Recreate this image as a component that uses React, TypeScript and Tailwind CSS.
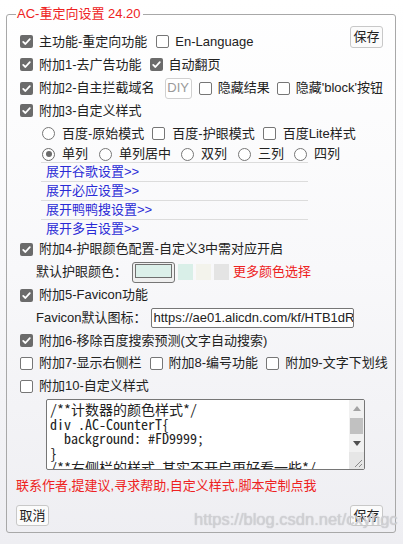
import React from "react";

const CB = ({ checked }: { checked?: boolean }) =>
  checked ? (
    <span className="inline-flex h-[13px] w-[13px] shrink-0 items-center justify-center rounded-[2px] bg-[#6b6b6b]">
      <svg width="13" height="13" viewBox="0 0 13 13">
        <path d="M3.2 6.9 L5.4 9 L9.8 4.1" fill="none" stroke="#fff" strokeWidth="1.8" strokeLinecap="round" strokeLinejoin="round" />
      </svg>
    </span>
  ) : (
    <span className="inline-block h-[13px] w-[13px] shrink-0 rounded-[2px] border border-[#767676] bg-white" />
  );

const Radio = ({ checked }: { checked?: boolean }) => (
  <span
    className={
      checked
        ? "flex h-[13px] w-[13px] shrink-0 items-center justify-center rounded-full border-[1.5px] border-[#6b6b6b] bg-white"
        : "flex h-[13px] w-[13px] shrink-0 items-center justify-center rounded-full border border-[#767676] bg-white"
    }
  >
    {checked && <span className="h-[6px] w-[6px] rounded-full bg-[#6b6b6b]" />}
  </span>
);

const Item = ({ checked, label, className = "" }: { checked?: boolean; label: string; className?: string }) => (
  <div className={"flex items-center gap-[6px] " + className}>
    <CB checked={checked} />
    <span className="whitespace-nowrap">{label}</span>
  </div>
);

const RItem = ({ checked, label, className = "" }: { checked?: boolean; label: string; className?: string }) => (
  <div className={"flex items-center gap-[7px] " + className}>
    <Radio checked={checked} />
    <span className="whitespace-nowrap">{label}</span>
  </div>
);

const Btn = ({ label }: { label: string }) => (
  <div className="flex h-[21px] w-[33px] items-center justify-center rounded-[3px] border border-[#c8c8c8] bg-[#fbfbfb] text-[13px] leading-[16px] text-[#222]">
    {label}
  </div>
);

const code = [
  "/**计数器的颜色样式*/",
  "div .AC-CounterT{",
  "  background: #FD9999;",
  "}",
  "/**右侧栏的样式-其实不开启更好看一些*/",
];

export default function App() {
  return (
    <div className="relative h-[544px] w-[403px] overflow-hidden bg-linear-to-b from-white via-[#f8f8fa] to-[#eeeef2] font-['Liberation_Sans','Noto_Sans_CJK_SC',sans-serif] text-[13px] leading-[18px] text-[#222]">
      <fieldset className="ml-[6px] mt-[4px] w-[390px] min-w-0 rounded-[3px] border border-[#a8a8a8] pb-[6px] pl-[9px] pr-[12px] pt-[6px]">
        <legend className="pl-[1px] pr-[2px] text-[13px] leading-[20px] text-[#ee2222]">AC-重定向设置 24.20</legend>

        {/* row 1 */}
        <div className="flex h-[23px] items-center">
          <Item checked label="主功能-重定向功能" className="ml-[4px]" />
          <Item label="En-Language" className="ml-[9px]" />
          <div className="mb-[10px] ml-auto">
            <div className="flex h-[22px] w-[33px] items-center justify-center rounded-[3px] border border-[#c8c8c8] bg-[#fbfbfb]">保存</div>
          </div>
        </div>

        {/* row 2 */}
        <div className="flex h-[23px] items-center">
          <Item checked label="附加1-去广告功能" className="ml-[4px]" />
          <Item checked label="自动翻页" className="ml-[8px]" />
        </div>

        {/* row 3 */}
        <div className="flex h-[24px] items-center">
          <Item checked label="附加2-自主拦截域名" className="ml-[4px]" />
          <div className="ml-[10px] flex h-[21px] w-[29px] items-center justify-center rounded-[3px] border border-[#d0d0d0] bg-white text-[#9a9a9a]">DIY</div>
          <Item label="隐藏结果" className="ml-[7px]" />
          <Item label="隐藏'block'按钮" className="ml-[7px]" />
        </div>

        {/* row 4 */}
        <div className="flex h-[21px] items-center">
          <Item checked label="附加3-自定义样式" className="ml-[4px]" />
        </div>

        {/* row 5 */}
        <div className="flex h-[25px] items-center pl-[26px]">
          <RItem label="百度-原始模式" />
          <Item label="百度-护眼模式" className="ml-[8px] gap-[7px]" />
          <Item label="百度Lite样式" className="ml-[8px] gap-[7px]" />
        </div>

        {/* row 6 */}
        <div className="flex h-[16px] items-center pl-[26px]">
          <RItem checked label="单列" />
          <RItem label="单列居中" className="ml-[11px]" />
          <RItem label="双列" className="ml-[10px]" />
          <RItem label="三列" className="ml-[11px]" />
          <RItem label="四列" className="ml-[10px]" />
        </div>

        {/* links */}
        <div className="ml-[25px] flex w-[267px] flex-col text-[#2a2ad6]">
          {["展开谷歌设置>>", "展开必应设置>>", "展开鸭鸭搜设置>>", "展开多吉设置>>"].map((t) => (
            <div key={t} className="flex h-[19px] items-center border-t border-[#dcdcdc] pl-[5px]">
              {t}
            </div>
          ))}
        </div>

        {/* 附加4 */}
        <div className="flex h-[22px] items-center">
          <Item checked label="附加4-护眼颜色配置-自定义3中需对应开启" className="ml-[4px]" />
        </div>

        {/* color row */}
        <div className="ml-[20px] flex h-[24px] items-center">
          <span className="whitespace-nowrap">默认护眼颜色：</span>
          <div className="ml-[5px] flex h-[21px] w-[43px] items-center justify-center rounded-[3px] border border-[#767676] bg-[#efefef]">
            <div className="mb-[2px] h-[14px] w-[37px] border border-[#6f6f6f] bg-[#dcf0ea]" />
          </div>
          <div className="ml-[3px] flex gap-[3px]">
            <span className="h-[16px] w-[15px] bg-[#d9efe8]" />
            <span className="h-[16px] w-[15px] bg-[#f3f3ec]" />
            <span className="h-[16px] w-[15px] bg-[#e4e4e4]" />
          </div>
          <span className="ml-[4px] whitespace-nowrap text-[#ee2222]">更多颜色选择</span>
        </div>

        {/* 附加5 */}
        <div className="flex h-[22px] items-center">
          <Item checked label="附加5-Favicon功能" className="ml-[4px]" />
        </div>

        {/* favicon row */}
        <div className="ml-[20px] flex h-[24px] items-center">
          <span className="whitespace-nowrap">Favicon默认图标：</span>
          <div className="ml-[4px] flex h-[20px] w-[203px] items-center overflow-hidden whitespace-nowrap rounded-[2px] border border-[#767676] bg-white pl-[2px]">
            https://ae01.alicdn.com/kf/HTB1dR
          </div>
        </div>

        {/* 附加6 */}
        <div className="flex h-[21px] items-center">
          <Item checked label="附加6-移除百度搜索预测(文字自动搜索)" className="ml-[4px]" />
        </div>

        {/* 附加7-9 */}
        <div className="flex h-[24px] items-center">
          <Item label="附加7-显示右侧栏" className="ml-[4px]" />
          <Item label="附加8-编号功能" className="ml-[8px]" />
          <Item label="附加9-文字下划线" className="ml-[8px]" />
        </div>

        {/* 附加10 */}
        <div className="flex h-[22px] items-center">
          <Item label="附加10-自定义样式" className="ml-[4px]" />
        </div>

        {/* textarea */}
        <div className="ml-[30px] mt-[2px] flex h-[71px] w-[319px] overflow-hidden rounded-[2px] border border-[#767676] bg-white">
          <div className="min-w-0 flex-1 overflow-hidden whitespace-pre pl-[3px] pt-[2px] font-['Noto_Sans_Mono_CJK_SC','Liberation_Mono',monospace] text-[14px] leading-[14.6px] text-[#222]">
            {code.map((l, i) => (
              <div key={i}>{l}</div>
            ))}
          </div>
          <div className="flex w-[15px] shrink-0 flex-col bg-[#f1f1f1]">
            <div className="flex h-[16px] items-center justify-center">
              <svg width="8" height="5" viewBox="0 0 8 5"><path d="M0 5 L4 0 L8 5 Z" fill="#a3a3a3" /></svg>
            </div>
            <div className="mx-[1px] mt-[2px] h-[16px] bg-[#c1c1c1]" />
            <div className="flex h-[18px] items-center justify-center">
              <svg width="8" height="5" viewBox="0 0 8 5"><path d="M0 0 L8 0 L4 5 Z" fill="#505050" /></svg>
            </div>
            <div className="relative flex-1 bg-[#e6e6e6]">
              <svg className="absolute bottom-[1px] right-[1px]" width="10" height="10" viewBox="0 0 10 10">
                <path d="M9 2 L2 9 M9 6 L6 9" stroke="#8a8a8a" strokeWidth="1" />
              </svg>
            </div>
          </div>
        </div>

        {/* red link */}
        <div className="mt-[7px] flex h-[18px] items-center whitespace-nowrap text-[#ee2222]">
          联系作者,提建议,寻求帮助,自定义样式,脚本定制点我
        </div>

        {/* bottom buttons */}
        <div className="mt-[10px] flex h-[21px] items-center justify-between">
          <Btn label="取消" />
          <Btn label="保存" />
        </div>
      </fieldset>

      {/* watermark */}
      <div className="pointer-events-none absolute left-[194px] top-[509px] whitespace-nowrap font-['Liberation_Sans',sans-serif] text-[16.5px] leading-[20px] text-[#d4d4d8]/80 [text-shadow:0_0_1px_#b8b8bc]">
        https://blog.csdn.net/cxyhgc
      </div>
    </div>
  );
}
